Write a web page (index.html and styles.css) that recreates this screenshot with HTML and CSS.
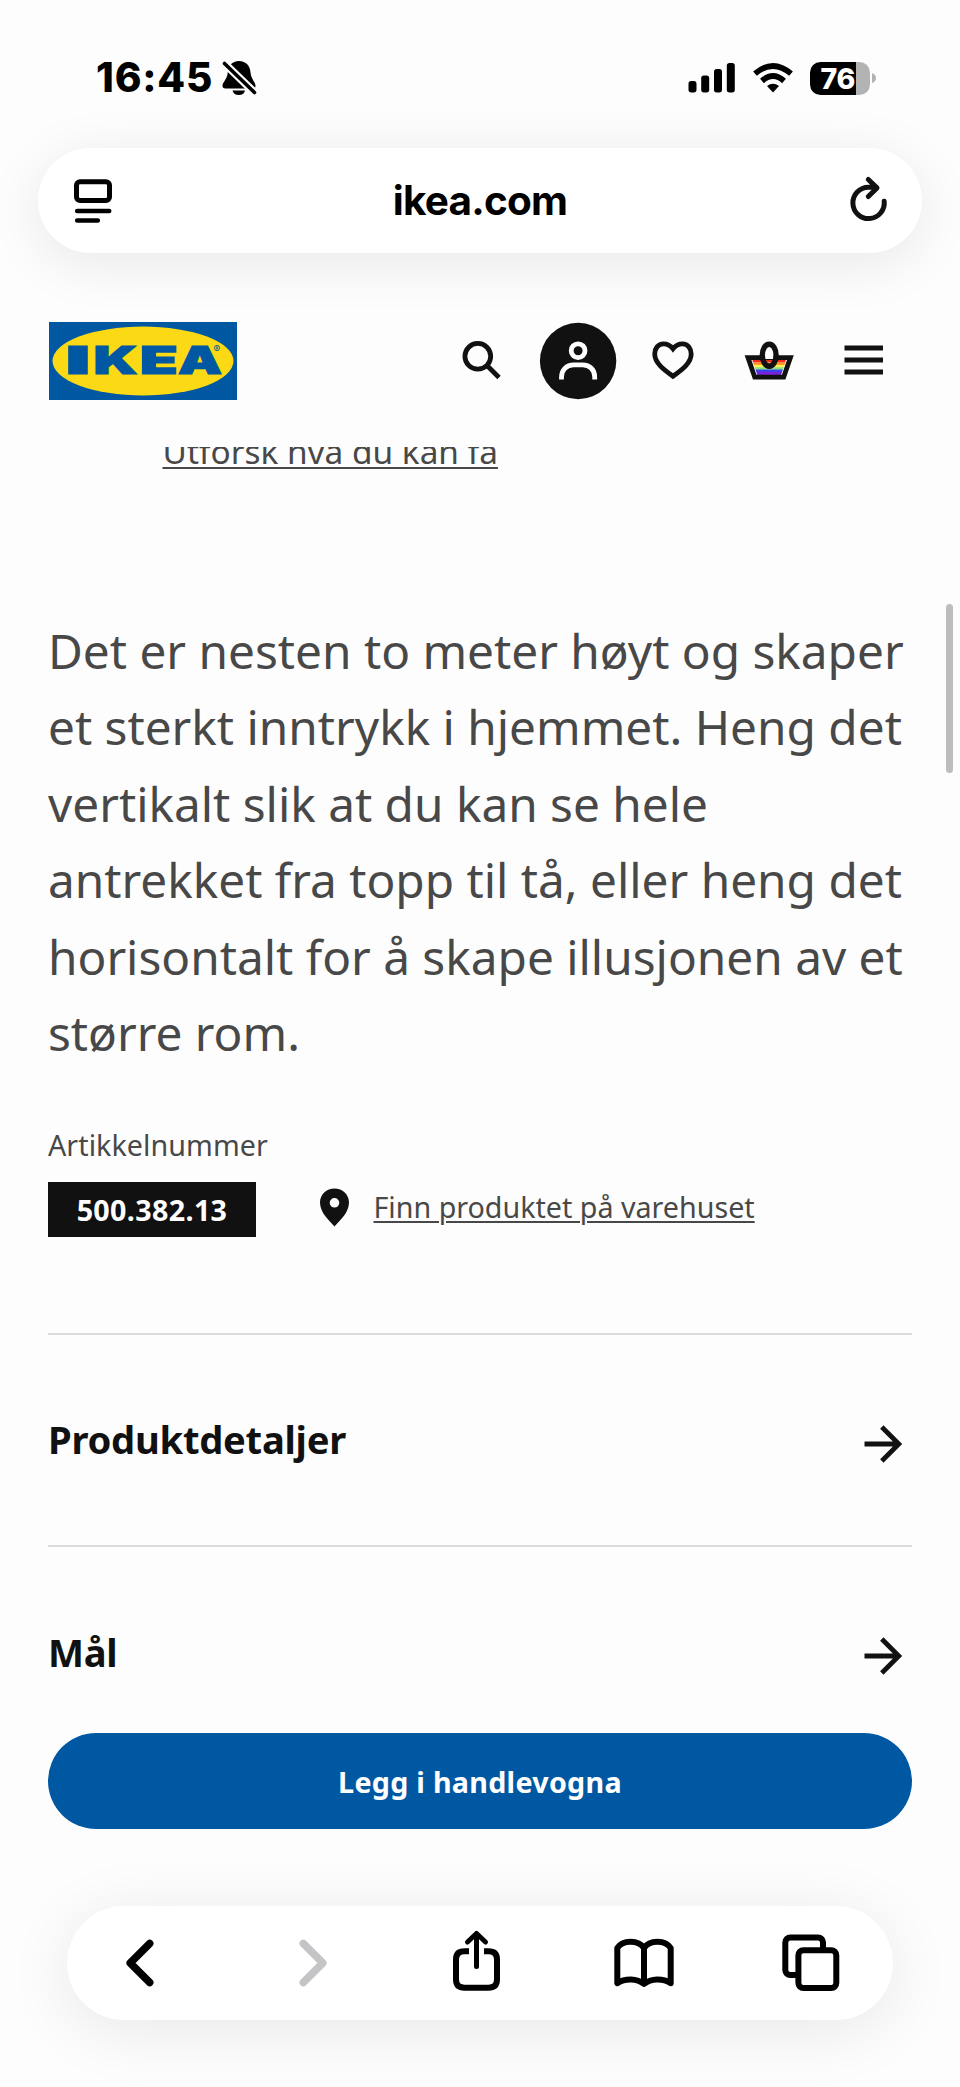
FILE: index.html
```html
<!DOCTYPE html>
<html lang="no">
<head>
<meta charset="utf-8">
<title>ikea.com</title>
<link rel="stylesheet" href="styles.css">
</head>
<body>
<div class="screen">
  <div class="status">
    <div class="status-left">
      <span class="time">16:45</span>
      <svg class="bell" width="36" height="38" viewBox="0 0 36 38">
        <path d="M18 2c-7 0-11 5-11.300 11.500C6.500 20 1.500 23 1.500 27c0 1.500 1 2.500 3 2.500h27c2 0 3-1 3-2.500 0-4-4.500-7-5-13.500C29.200 7 25 2 18 2zM11.500 31.500h12.500c-.5 3-3 4.500-6.200 4.500s-5.500-1.500-6.300-4.500z"/>
        <path class="bell-gap" d="M1.500 2.500 34 34"/>
        <path class="bell-slash" d="M3.500 4.500 33.500 33.500"/>
      </svg>
    </div>
    <div class="status-right">
      <svg width="48" height="30" viewBox="0 0 48 30">
        <rect x="0.500" y="18" width="8" height="11.500" rx="2.700"/><rect x="13.200" y="12.500" width="8" height="17" rx="2.700"/><rect x="26" y="6" width="8" height="23.500" rx="2.700"/><rect x="38.800" y="0" width="8" height="29.500" rx="2.700"/>
      </svg>
      <svg class="wifi" width="40" height="30" viewBox="0 0 40 30">
        <path class="wave" d="M2 10.600Q20-4.800 38 10.600M9 18Q20 8.200 31 18"/>
        <path d="M20 29.500 14 23Q20 18.500 26 23z"/>
      </svg>
      <div class="battery"><span>76</span></div>
      <svg width="4" height="10" viewBox="0 0 4 10"><path class="tip" d="M0 0q4 1.500 4 5t-4 5z"/></svg>
    </div>
  </div>

  <div class="address">
    <svg width="40" height="46" viewBox="0 0 40 46">
      <g class="line5"><rect x="3.500" y="3.700" width="33" height="18.800" rx="3.500"/><path d="M4.200 33h32M4.200 42.500h20.600" stroke-width="4.600"/></g>
    </svg>
    <span class="host">ikea.com</span>
    <svg width="38" height="46" viewBox="0 0 38 46">
      <path class="line5 dark" d="M34.200 23.300A15.700 15.700 0 1 1 18.500 9.200H26.500M18.300 1.500 27 9.900 18.300 18.600"/>
    </svg>
  </div>

  <header class="header">
    <svg class="logo" width="188" height="78" viewBox="0 0 188 78">
      <rect class="logo-blue" width="188" height="78"/>
      <ellipse class="logo-yellow" cx="94" cy="39" rx="90.500" ry="34.500"/>
      <g class="logo-text">
        <text x="16.500" y="51.800" textLength="25" lengthAdjust="spacingAndGlyphs">I</text>
        <text x="44.500" y="51.800" textLength="44" lengthAdjust="spacingAndGlyphs">K</text>
        <text x="91" y="51.800" textLength="38" lengthAdjust="spacingAndGlyphs">E</text>
        <text x="129" y="51.800" textLength="44" lengthAdjust="spacingAndGlyphs">A</text>
      </g>
      <text class="logo-reg" x="164.500" y="30.500">®</text>
    </svg>
    <nav class="nav">
      <svg viewBox="0 0 95.500 96"><g class="stroke"><circle cx="43.800" cy="43.300" r="12.900"/><path d="M53 52.500 65 64.500"/></g></svg>
      <svg viewBox="0 0 95.500 96"><circle cx="48.100" cy="48" r="38.200" class="ink"/><g class="stroke white"><circle cx="48.100" cy="37.700" r="6.900"/><path d="M31.500 66.500v-2.500c0-7 5-12.100 12-12.100h9.200c7 0 12 5 12 12.100v2.500"/></g></svg>
      <svg viewBox="0 0 95.500 96"><path class="stroke" d="M48 35.800C45 32 41.500 30.900 38.500 30.900 33 30.900 29.700 35.500 29.700 41 29.700 50 39 56.800 48 63.200 57 56.800 66.200 50 66.200 41 66.200 35.500 63 30.900 57.500 30.900 54.500 30.900 51 32 48 35.800z"/></svg>
      <svg viewBox="0 0 95.500 96">
        <path fill="#f02a1d" d="M31.200 46H65.100L64.200 49.600H32.100z"/><path fill="#ff8a1f" d="M32.100 49.400H64.300L63.500 52H33z"/><path fill="#fff04a" d="M32.900 51.800H63.500L62.600 54.400H33.800z"/><path fill="#86e07a" d="M33.700 54.200H62.700L61.800 56.800H34.600z"/><path fill="#3b3ff0" d="M34.500 56.600H61.900L61 59.200H35.400z"/><path fill="#7a22d8" d="M35.400 59H61L60 62.700H36.400z"/>
        <path class="stroke" d="M27 44.600H69.400L62.700 64.100H33.700z"/>
        <path fill="#fdfdfd" d="M43.500 46V42q1-8.500 4.700-8.500T52.900 42v4z"/>
        <ellipse class="stroke handle" cx="48.200" cy="42.200" rx="6.900" ry="11"/>
      </svg>
      <svg viewBox="0 0 95.500 96"><path class="ink" d="M28.500 32.500H67v5H28.500zM28.500 44.500H67v5H28.500zM28.500 56.500H67v5H28.500z"/></svg>
    </nav>
  </header>

  <main class="page">
    <a class="explore">Utforsk hva du kan få</a>
    <p class="summary">Det er nesten to meter høyt og skaper<br>et sterkt inntrykk i hjemmet. Heng det<br>vertikalt slik at du kan se hele<br>antrekket fra topp til tå, eller heng det<br>horisontalt for å skape illusjonen av et<br>større rom.</p>
    <div class="label">Artikkelnummer</div>
    <div class="article">
      <span class="number">500.382.13</span>
      <svg class="pin" width="29" height="39" viewBox="0 0 29 39"><path class="ink" fill-rule="evenodd" d="M14.500.5C6.500.5 0 6.500 0 14.500 0 25 9.500 32.500 14.500 38.500 19.500 32.500 29 25 29 14.500 29 6.500 22.500.5 14.500.5zM14.500 10a4.800 4.800 0 1 1 0 9.600 4.800 4.800 0 1 1 0-9.600z"/></svg>
      <a class="store">Finn produktet på varehuset</a>
    </div>
    <div class="row"><h2>Produktdetaljer</h2><svg width="40" height="40" viewBox="0 0 40 40"><path class="stroke" d="M1.500 20H36M18.800 3 35.800 20 18.800 37"/></svg></div>
    <div class="row"><h2>Mål</h2><svg width="40" height="40" viewBox="0 0 40 40"><path class="stroke" d="M1.500 20H36M18.800 3 35.800 20 18.800 37"/></svg></div>
  </main>

  <button class="buy">Legg i handlevogna</button>

  <div class="toolbar">
    <svg viewBox="0 0 60 114"><path class="chev" d="M39.700 37.500 20.200 57 39.700 76.500"/></svg>
    <svg viewBox="0 0 60 114"><path class="chev off" d="M26.300 37.500 45.800 57 26.300 76.500"/></svg>
    <svg viewBox="0 0 60 114"><g class="line6"><path class="butt" d="M24 45.300H19.500Q11 45.300 11 53.500V73.500Q11 81.700 19.500 81.700H43.500Q52 81.700 52 73.500V53.500Q52 45.300 43.500 45.300H39"/><path stroke-width="5" d="M31.500 28.500V60.500M22.500 36 31.500 27.500 40.500 36"/></g></svg>
    <svg viewBox="0 0 60 114"><path class="line6" d="M4.300 77.200V42C9.500 33.500 25.500 33.500 31 42 36.500 33.500 52.500 33.500 57.700 42V77.200C50 72.200 38 72.200 31 78 24 72.200 12 72.200 4.300 77.200zM31 42V77.500"/></svg>
    <svg viewBox="0 0 60 114"><g class="line6 fill"><rect x="4.300" y="31.400" width="37.700" height="37.700" rx="5"/><rect x="17.400" y="44.200" width="37.900" height="37.900" rx="5"/></g></svg>
  </div>
  <div class="scrollbar"></div>
</div>
</body>
</html>
```
FILE: styles.css
```css
* { box-sizing: border-box; }
body { margin: 0; background: #fdfdfd; }
svg { display: block; flex: none; overflow: visible; }
.screen {
  position: relative;
  width: 960px;
  height: 2087px;
  overflow: hidden;
  display: flex;
  flex-direction: column;
  background: #fdfdfd;
  font-family: "Noto Sans", sans-serif;
  color: #111;
}

/* Status bar */
.status {
  height: 148px;
  padding: 54px 84px 46px 96px;
  display: flex;
  justify-content: space-between;
  align-items: center;
  font-family: Inter, sans-serif;
  color: #000;
}
.status-left, .status-right { display: flex; align-items: center; }
.time { width: 117px; font-size: 40.500px; font-weight: 800; line-height: 48px; letter-spacing: 0.800px; white-space: nowrap; }
.bell { margin-left: 7.500px; }
.bell-gap { fill: none; stroke: #fdfdfd; stroke-width: 8; }
.bell-slash { fill: none; stroke: #000; stroke-width: 3.600; stroke-linecap: round; }
.wifi { margin: 0 17px; }
.wave { fill: none; stroke: #000; stroke-width: 5.800; }
.battery {
  width: 60px;
  height: 33px;
  margin-right: 2.500px;
  border-radius: 10.500px;
  background: linear-gradient(90deg, #000 46px, #b3b3b3 46px);
  padding-left: 11px;
}
.battery span { color: #fff; font-size: 28.500px; font-weight: 800; line-height: 33px; display: block; letter-spacing: -0.300px; }
.tip { fill: #b3b3b3; }

/* Address bar */
.address {
  height: 105px;
  margin: 0 38px;
  padding: 0 34px 0 35px;
  border-radius: 53px;
  background: #fff;
  box-shadow: 0 10px 56px rgba(0, 0, 0, 0.085);
  display: flex;
  align-items: center;
  justify-content: space-between;
}
.host { margin: 1px 3px 0 0; font: 700 40.500px/50px Inter, sans-serif; letter-spacing: -0.800px; color: #000; }
.line5 { fill: none; stroke: #000; stroke-width: 5; stroke-linecap: round; stroke-linejoin: round; }
.dark { stroke: #111; }

/* Site header */
.header {
  height: 194px;
  padding: 59.500px 48.500px 0 49px;
  display: flex;
  justify-content: space-between;
  align-items: flex-start;
}
.logo { margin-top: 9px; }
.logo-blue { fill: #0058a3; }
.logo-yellow { fill: #fbd914; }
.logo-text { fill: #0058a3; stroke: #0058a3; stroke-width: 1.200; font: 900 38px Inter, sans-serif; }
.logo-reg { fill: #0058a3; font: 10px Inter, sans-serif; }
.nav { display: flex; }
.nav svg { width: 95.500px; height: 96px; }
.ink { fill: #111; }
.stroke { fill: none; stroke: #111; stroke-width: 4.800; }
.white { stroke: #fff; }
.handle { stroke-width: 5.400; }

/* Product content */
.page { height: 1286px; padding: 0 48px; overflow: hidden; color: #484848; }
.explore {
  display: block;
  margin: -20px 0 0 114.500px;
  height: 48px;
  font-size: 33.400px;
  line-height: 48px;
  text-decoration: underline;
  text-decoration-thickness: 2.400px;
  text-underline-offset: 2.500px;
}
.summary { margin: 138px 0 0; font-size: 47.760px; line-height: 76.420px; white-space: nowrap; }
.label { margin-top: 51px; height: 44px; font-size: 28.660px; line-height: 43px; letter-spacing: 0.060px; }
.article { margin-top: 15.500px; height: 55px; display: flex; align-items: center; }
.number {
  width: 208px;
  height: 55px;
  background: #111;
  color: #fff;
  font-size: 28.660px;
  font-weight: 700;
  line-height: 55px;
  text-align: center;
  letter-spacing: 0.350px;
}
.pin { margin: -4.500px 24.500px 0 64px; }
.store {
  margin-top: -6px;
  font-size: 28.660px;
  line-height: 43px;
  text-decoration: underline;
  text-decoration-thickness: 2.400px;
  text-underline-offset: 3px;
}
.row {
  height: 212.600px;
  border-top: 2.400px solid #dcdcdc;
  padding: 8px 9px 0 0;
  display: flex;
  align-items: center;
  justify-content: space-between;
}
.article + .row { margin-top: 95.500px; }
.row h2 { margin: -9px 0 0; font-size: 38.200px; line-height: 58px; font-weight: 700; letter-spacing: -0.270px; color: #111; }

.buy {
  height: 96px;
  margin: 0 48px;
  border: 0;
  border-radius: 48px;
  background: #0058a3;
  color: #fff;
  font: 700 28.660px/43px "Noto Sans", sans-serif;
  letter-spacing: 0.290px;
  flex: none;
}

/* Browser toolbar */
.toolbar {
  height: 114px;
  margin: 77px 67px 0;
  padding: 0 52.500px 0 42.500px;
  border-radius: 57px;
  background: #fff;
  box-shadow: 0 10px 66px rgba(0, 0, 0, 0.085);
  display: flex;
  justify-content: space-between;
}
.toolbar svg { width: 60px; height: 114px; }
.chev { fill: none; stroke: #000; stroke-width: 7.500; stroke-linecap: round; stroke-linejoin: round; }
.off { stroke: #c4c4c6; }
.line6 { fill: none; stroke: #000; stroke-width: 6; stroke-linecap: round; stroke-linejoin: round; }
.fill { fill: #fff; }
.butt { stroke-linecap: butt; }

.scrollbar {
  position: absolute;
  right: 7px;
  top: 604px;
  width: 7px;
  height: 169px;
  border-radius: 4px;
  background: #bdbdbd;
}
```
